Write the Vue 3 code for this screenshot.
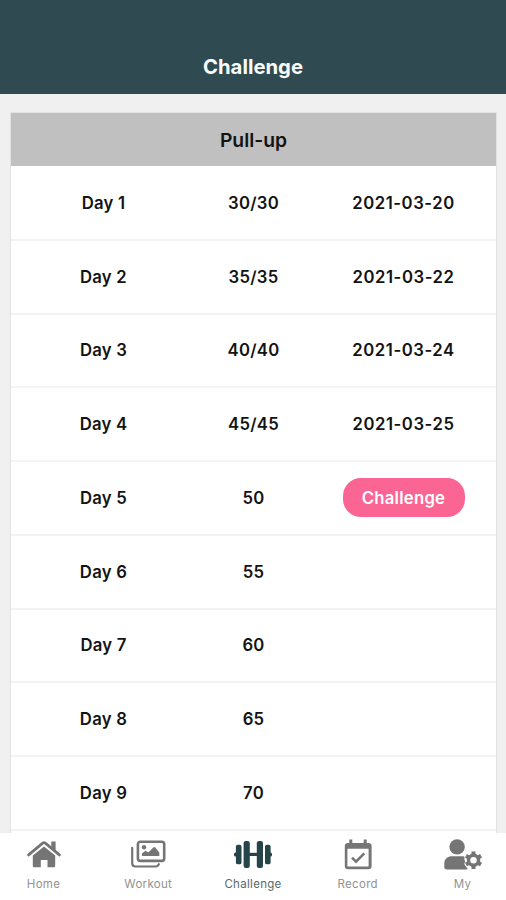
<script setup>
const days = [
  { label: 'Day 1', count: '30/30', date: '2021-03-20' },
  { label: 'Day 2', count: '35/35', date: '2021-03-22' },
  { label: 'Day 3', count: '40/40', date: '2021-03-24' },
  { label: 'Day 4', count: '45/45', date: '2021-03-25' },
  { label: 'Day 5', count: '50', current: true },
  { label: 'Day 6', count: '55' },
  { label: 'Day 7', count: '60' },
  { label: 'Day 8', count: '65' },
  { label: 'Day 9', count: '70' },
]
</script>

<template>
  <div class="screen">
    <header class="top"><h1>Challenge</h1></header>
    <main class="content">
      <section class="card">
        <h2 class="card-title">Pull-up</h2>
        <div v-for="d in days" :key="d.label" class="row">
          <span>{{ d.label }}</span>
          <span>{{ d.count }}</span>
          <span v-if="d.date" class="date">{{ d.date }}</span>
          <button v-else-if="d.current" class="go">Challenge</button>
        </div>
      </section>
    </main>
    <nav class="tabs">
      <a class="tab">
        <svg width="40" height="34" viewBox="0 0 40 34">
          <path d="M8.800 17.600 20 8.500l11.200 9.100V28q0 1.200-1.200 1.200h-6.500V22h-6.700v7.200H10q-1.200 0-1.200-1.200z" fill="currentColor" />
          <path d="M4.600 16.900 18.700 5.100q1.300-1 2.600 0L35.400 16.900" fill="none" stroke="currentColor" stroke-width="2.800" stroke-linecap="round" />
          <path d="M27.300 3.500h4.300v11l-4.300-3.700z" fill="currentColor" />
        </svg>
        <span>Home</span>
      </a>
      <a class="tab">
        <svg width="40" height="34" viewBox="0 0 40 34">
          <rect x="9.900" y="3.700" width="26.300" height="19.200" rx="2.400" fill="none" stroke="currentColor" stroke-width="2.600" />
          <path d="M4.200 9.800v15.500q0 3.200 3.200 3.200h20.300q2.300 0 3.200-2.300" fill="none" stroke="currentColor" stroke-width="2.200" stroke-linecap="round" />
          <circle cx="16" cy="9.200" r="2.200" fill="currentColor" />
          <path d="M14 18v-2.700l3.600-2.600 2.700 1.900 5-5.200q1-.9 2 0l4 5V18z" fill="currentColor" />
        </svg>
        <span>Workout</span>
      </a>
      <a class="tab active">
        <svg width="40" height="34" viewBox="0 0 40 34">
          <g fill="currentColor">
            <rect x="1" y="14.400" width="4" height="4" rx="1.500" />
            <rect x="2.900" y="6.700" width="5.600" height="19.600" rx="1.900" />
            <rect x="10.600" y="3" width="6.200" height="27" rx="2.200" />
            <rect x="16" y="14.800" width="8" height="3.200" />
            <rect x="23.800" y="3" width="6.200" height="27" rx="2.200" />
            <rect x="32" y="6.700" width="5.600" height="19.600" rx="1.900" />
            <rect x="35" y="14.400" width="4" height="4" rx="1.500" />
          </g>
        </svg>
        <span>Challenge</span>
      </a>
      <a class="tab">
        <svg width="40" height="34" viewBox="0 0 40 34">
          <path d="M11.300 1.500h3v3.400h11.400V1.500h3v3.400h1.600q3.300 0 3.300 3.300V28q0 3.300-3.300 3.300H10.100q-3.300 0-3.300-3.300V8.200q0-3.300 3.300-3.300h1.200zM9.400 10.700v17q0 .9.900.9h19.400q.9 0 .9-.9v-17z" fill="currentColor" fill-rule="evenodd" />
          <path d="m14 19.700 4 4 8.300-8.400" fill="none" stroke="currentColor" stroke-width="2.500" />
        </svg>
        <span>Record</span>
      </a>
      <a class="tab">
        <svg width="40" height="34" viewBox="0 0 40 34">
          <circle cx="14.100" cy="8.900" r="7.700" fill="currentColor" />
          <path d="M7.400 18.300h12.900q1.600 0 1.200 1.500-.5 2 .6 3.500-1.400 2.500.2 4.500l2.100 2.500q.6 1.200-1.200 1.200H3.900Q1.300 31.500 1.300 29v-3.700q0-5.500 6.100-7z" fill="currentColor" />
          <circle cx="30.500" cy="22.200" r="5" fill="none" stroke="currentColor" stroke-width="3.500" />
          <g stroke="currentColor" stroke-width="4">
            <path d="M30.500 13.500v3.300M30.500 27.600v3.300" />
            <path d="M30.500 13.500v3.300M30.500 27.600v3.300" transform="rotate(60 30.500 22.200)" />
            <path d="M30.500 13.500v3.300M30.500 27.600v3.300" transform="rotate(120 30.500 22.200)" />
          </g>
        </svg>
        <span>My</span>
      </a>
    </nav>
  </div>
</template>

<style>
body { margin: 0; overflow: hidden; }
</style>
<style scoped>
.screen {
  display: flex;
  flex-direction: column;
  width: 506px;
  height: 900px;
  overflow: hidden;
  background: #f0f0f1;
  color: #131313;
  font-family: Inter, "Liberation Sans", sans-serif;
}
.top {
  display: flex;
  flex: 0 0 93.500px;
  align-items: flex-end;
  justify-content: center;
  box-sizing: border-box;
  padding-bottom: 14px;
  background: #2f4a50;
}
h1 {
  margin: 0;
  color: #f8fbfc;
  font-size: 20.300px;
  font-weight: 650;
  line-height: 26px;
}
.content {
  display: flex;
  flex-direction: column;
  flex: 1;
  min-height: 0;
  overflow: hidden;
  padding: 18.500px 9px 0 10px;
}
.card {
  flex: 1;
  border: 1px solid #e1e2e4;
  border-width: 1px 1.500px 0;
  background: #fff;
}
.card-title {
  height: 53px;
  margin: 0 0 1px;
  background: #c0c0c0;
  font-size: 19.300px;
  font-weight: 600;
  line-height: 54px;
  text-align: center;
}
.row {
  display: grid;
  grid-template-columns: repeat(3, 150px);
  align-items: center;
  justify-content: center;
  justify-items: center;
  box-sizing: border-box;
  height: 73.750px;
  border-bottom: 2px solid #f2f3f3;
  font-size: 16.700px;
  font-weight: 600;
  letter-spacing: 0.250px;
}
.date { letter-spacing: 0.550px; }
.go {
  width: 122px;
  height: 39px;
  padding: 0;
  border: 0;
  border-radius: 18px;
  background: #fb6593;
  color: #fff;
  font: inherit;
  letter-spacing: inherit;
}
.tabs {
  display: flex;
  flex: 0 0 67px;
  justify-content: space-between;
  background: #fff;
}
.tab {
  display: flex;
  flex-direction: column;
  align-items: center;
  width: 87px;
  padding-top: 5px;
  color: #757575;
}
.tab span {
  margin-top: 5px;
  color: #929292;
  font-size: 11.500px;
  line-height: 14px;
  letter-spacing: 0.300px;
}
.tab.active { color: #25454b; }
.tab.active span { color: #59696d; }
</style>
